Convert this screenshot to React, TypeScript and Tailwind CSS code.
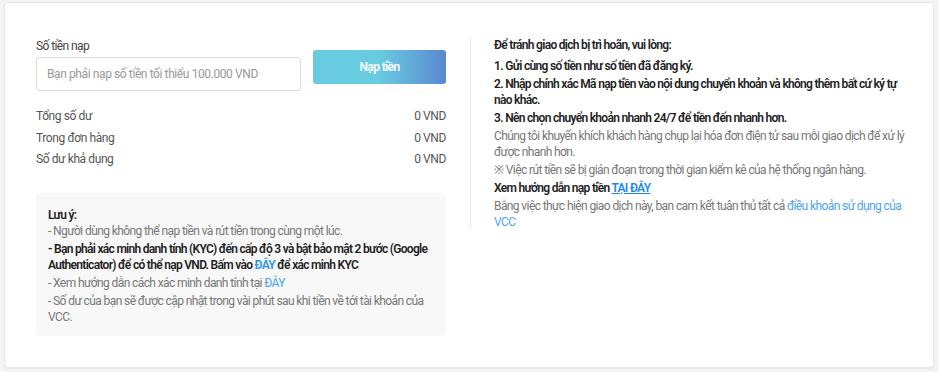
import React from "react";

const B = "font-semibold text-[#222] tracking-[-0.7px]";

export default function App() {
  const font = { fontFamily: "Roboto, 'Noto Sans', sans-serif" };
  return (
    <div className="w-[939px] h-[372px] bg-[#f4f4f4] pt-[2px] pl-[4px] pr-[5px] pb-[4px]" style={font}>
      <div className="h-full bg-white rounded-[4px] border border-[#e6e6e6] shadow-[0_1px_2px_rgba(0,0,0,0.06)] pl-[31px] pt-[32px] flex tracking-[-0.6px]">
        {/* Left column */}
        <div className="w-[410px] flex flex-col">
          <div className="flex">
            <div className="w-[265px] flex flex-col">
              <div className="text-[12px] leading-[16px] text-[#444] mt-[3px]">Số tiền nạp</div>
              <div className="mt-[3px] h-[34px] border border-[#dcdcdc] rounded-[3px] flex items-center pl-[10px] text-[12px] text-[#999] tracking-[-0.4px]">
                Bạn phải nạp số tiền tối thiểu 100.000 VND
              </div>
            </div>
            <div className="ml-[12px] mt-[15px] w-[133px] h-[34px] rounded-[3px] bg-gradient-to-r from-[#68cbe0] via-[#68cbe0] to-[#5a88cf] flex items-center justify-center text-white text-[12px] font-semibold">
              Nạp tiền
            </div>
          </div>
          <div className="mt-[17px] flex flex-col gap-[5px] text-[12px] leading-[16.5px] text-[#555] tracking-[-0.4px]">
            <div className="flex justify-between"><span>Tổng số dư</span><span>0 VND</span></div>
            <div className="flex justify-between"><span>Trong đơn hàng</span><span>0 VND</span></div>
            <div className="flex justify-between"><span>Số dư khả dụng</span><span>0 VND</span></div>
          </div>
          <div className="mt-[25px] h-[143px] bg-[#f8f8f8] rounded-[4px] pl-[12px] pr-[10px] pt-[14px] text-[12px] leading-[16px] text-[#777]">
            <div className={B}>Lưu ý:</div>
            <div>- Người dùng không thể nạp tiền và rút tiền trong cùng một lúc.</div>
            <div className={`${B} mt-[2px]`}>
              - Bạn phải xác minh danh tính (KYC) đến cấp độ 3 và bật bảo mật 2 bước (Google Authenticator) để có thể nạp VND. Bấm vào <span className="text-[#2f95e8]">ĐÂY</span> để xác minh KYC
            </div>
            <div className="mt-[2px]">- Xem hướng dẫn cách xác minh danh tính tại <span className="text-[#4aa3f0]">ĐÂY</span></div>
            <div className="mt-[2px]">- Số dư của bạn sẽ được cập nhật trong vài phút sau khi tiền về tới tài khoản của VCC.</div>
          </div>
        </div>
        {/* Divider */}
        <div className="ml-[24px] mt-[3px] w-px h-[190px] bg-[#e4e4e4]" />
        {/* Right column */}
        <div className="ml-[23px] w-[412px] text-[12px] leading-[16px] text-[#777] pt-[2px]">
          <div className={B}>Để tránh giao dịch bị trì hoãn, vui lòng:</div>
          <div className={`${B} mt-[5px]`}>1. Gửi cùng số tiền như số tiền đã đăng ký.</div>
          <div className={`${B} mt-[2px]`}>2. Nhập chính xác Mã nạp tiền vào nội dung chuyển khoản và không thêm bất cứ ký tự nào khác.</div>
          <div className={`${B} mt-[2px]`}>3. Nên chọn chuyển khoản nhanh 24/7 để tiền đến nhanh hơn.</div>
          <div className="mt-[2px]">Chúng tôi khuyến khích khách hàng chụp lại hóa đơn điện tử sau mỗi giao dịch để xử lý được nhanh hơn.</div>
          <div className="mt-[2px]">※ Việc rút tiền sẽ bị gián đoạn trong thời gian kiểm kê của hệ thống ngân hàng.</div>
          <div className={`${B} mt-[2px]`}>Xem hướng dẫn nạp tiền <span className="text-[#1f8ae6] underline">TẠI ĐÂY</span></div>
          <div className="mt-[2px]">Bằng việc thực hiện giao dịch này, bạn cam kết tuân thủ tất cả <span className="text-[#4aa3f0]">điều khoản sử dụng của VCC</span></div>
        </div>
      </div>
    </div>
  );
}
